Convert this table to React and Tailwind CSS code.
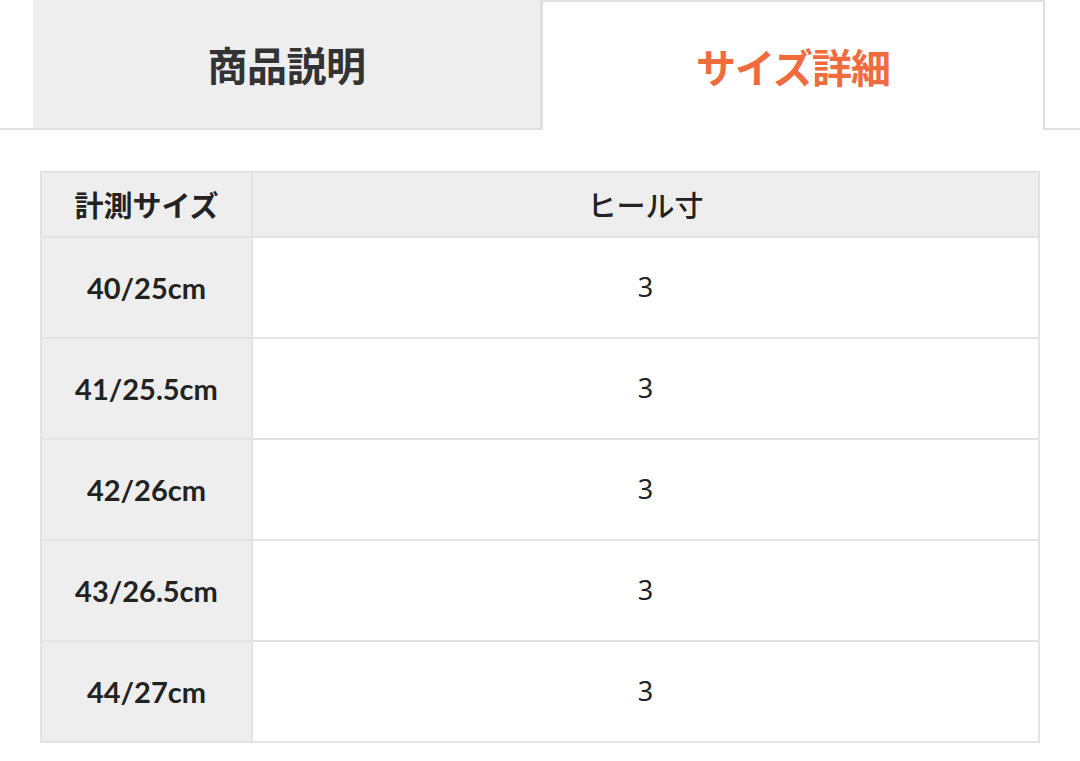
import React from "react";

const rows = [
  { size: "40/25cm", heel: "3" },
  { size: "41/25.5cm", heel: "3" },
  { size: "42/26cm", heel: "3" },
  { size: "43/26.5cm", heel: "3" },
  { size: "44/27cm", heel: "3" },
];

const App = () => {
  return (
    <div className="w-[1080px] h-[761px] bg-white overflow-hidden font-['Lato','Noto_Sans_CJK_JP',sans-serif]">
      {/* tabs */}
      <div className="flex h-[130px]">
        <div className="w-[33px] border-b-2 border-[#e0e0e0]" />
        <div className="w-[508px] bg-[#eeeeee] border-b-2 border-r border-[#e0e0e0] flex items-center justify-center">
          <span className="text-[40px] font-bold text-[#333333] font-['Noto_Sans_CJK_JP',sans-serif] tracking-[-0.5px]">
            商品説明
          </span>
        </div>
        <div className="w-[504px] bg-white border-t-2 border-x-2 border-[#e0e0e0] flex items-center justify-center">
          <span className="text-[40px] font-bold text-[#ef6c3f] font-['Noto_Sans_CJK_JP',sans-serif] tracking-[-1px]">
            サイズ詳細
          </span>
        </div>
        <div className="flex-1 border-b-2 border-[#e0e0e0]" />
      </div>

      {/* size table */}
      <div className="pt-[41px] px-[40px]">
        <table className="w-[1000px] border-collapse border-2 border-[#e3e3e3] table-fixed">
          <thead>
            <tr className="h-[65px] bg-[#eeeeee]">
              <th className="w-[211px] border-2 border-[#e3e3e3] text-[29px] font-bold text-[#222222] font-['Noto_Sans_CJK_JP',sans-serif]">
                計測サイズ
              </th>
              <th className="border-2 border-[#e3e3e3] text-[29px] font-medium text-[#222222] font-['Noto_Sans_CJK_JP',sans-serif]">
                ヒール寸
              </th>
            </tr>
          </thead>
          <tbody>
            {rows.map((row, index) => (
              <tr key={index} className="h-[101px]">
                <td className="bg-[#eeeeee] border-2 border-[#e3e3e3] text-center text-[29px] font-bold text-[#222222]">
                  {row.size}
                </td>
                <td className="border-2 border-[#e3e3e3] text-center text-[27px] text-[#222222] font-['Noto_Sans',sans-serif]">
                  {row.heel}
                </td>
              </tr>
            ))}
          </tbody>
        </table>
      </div>
    </div>
  );
};

export default App;
